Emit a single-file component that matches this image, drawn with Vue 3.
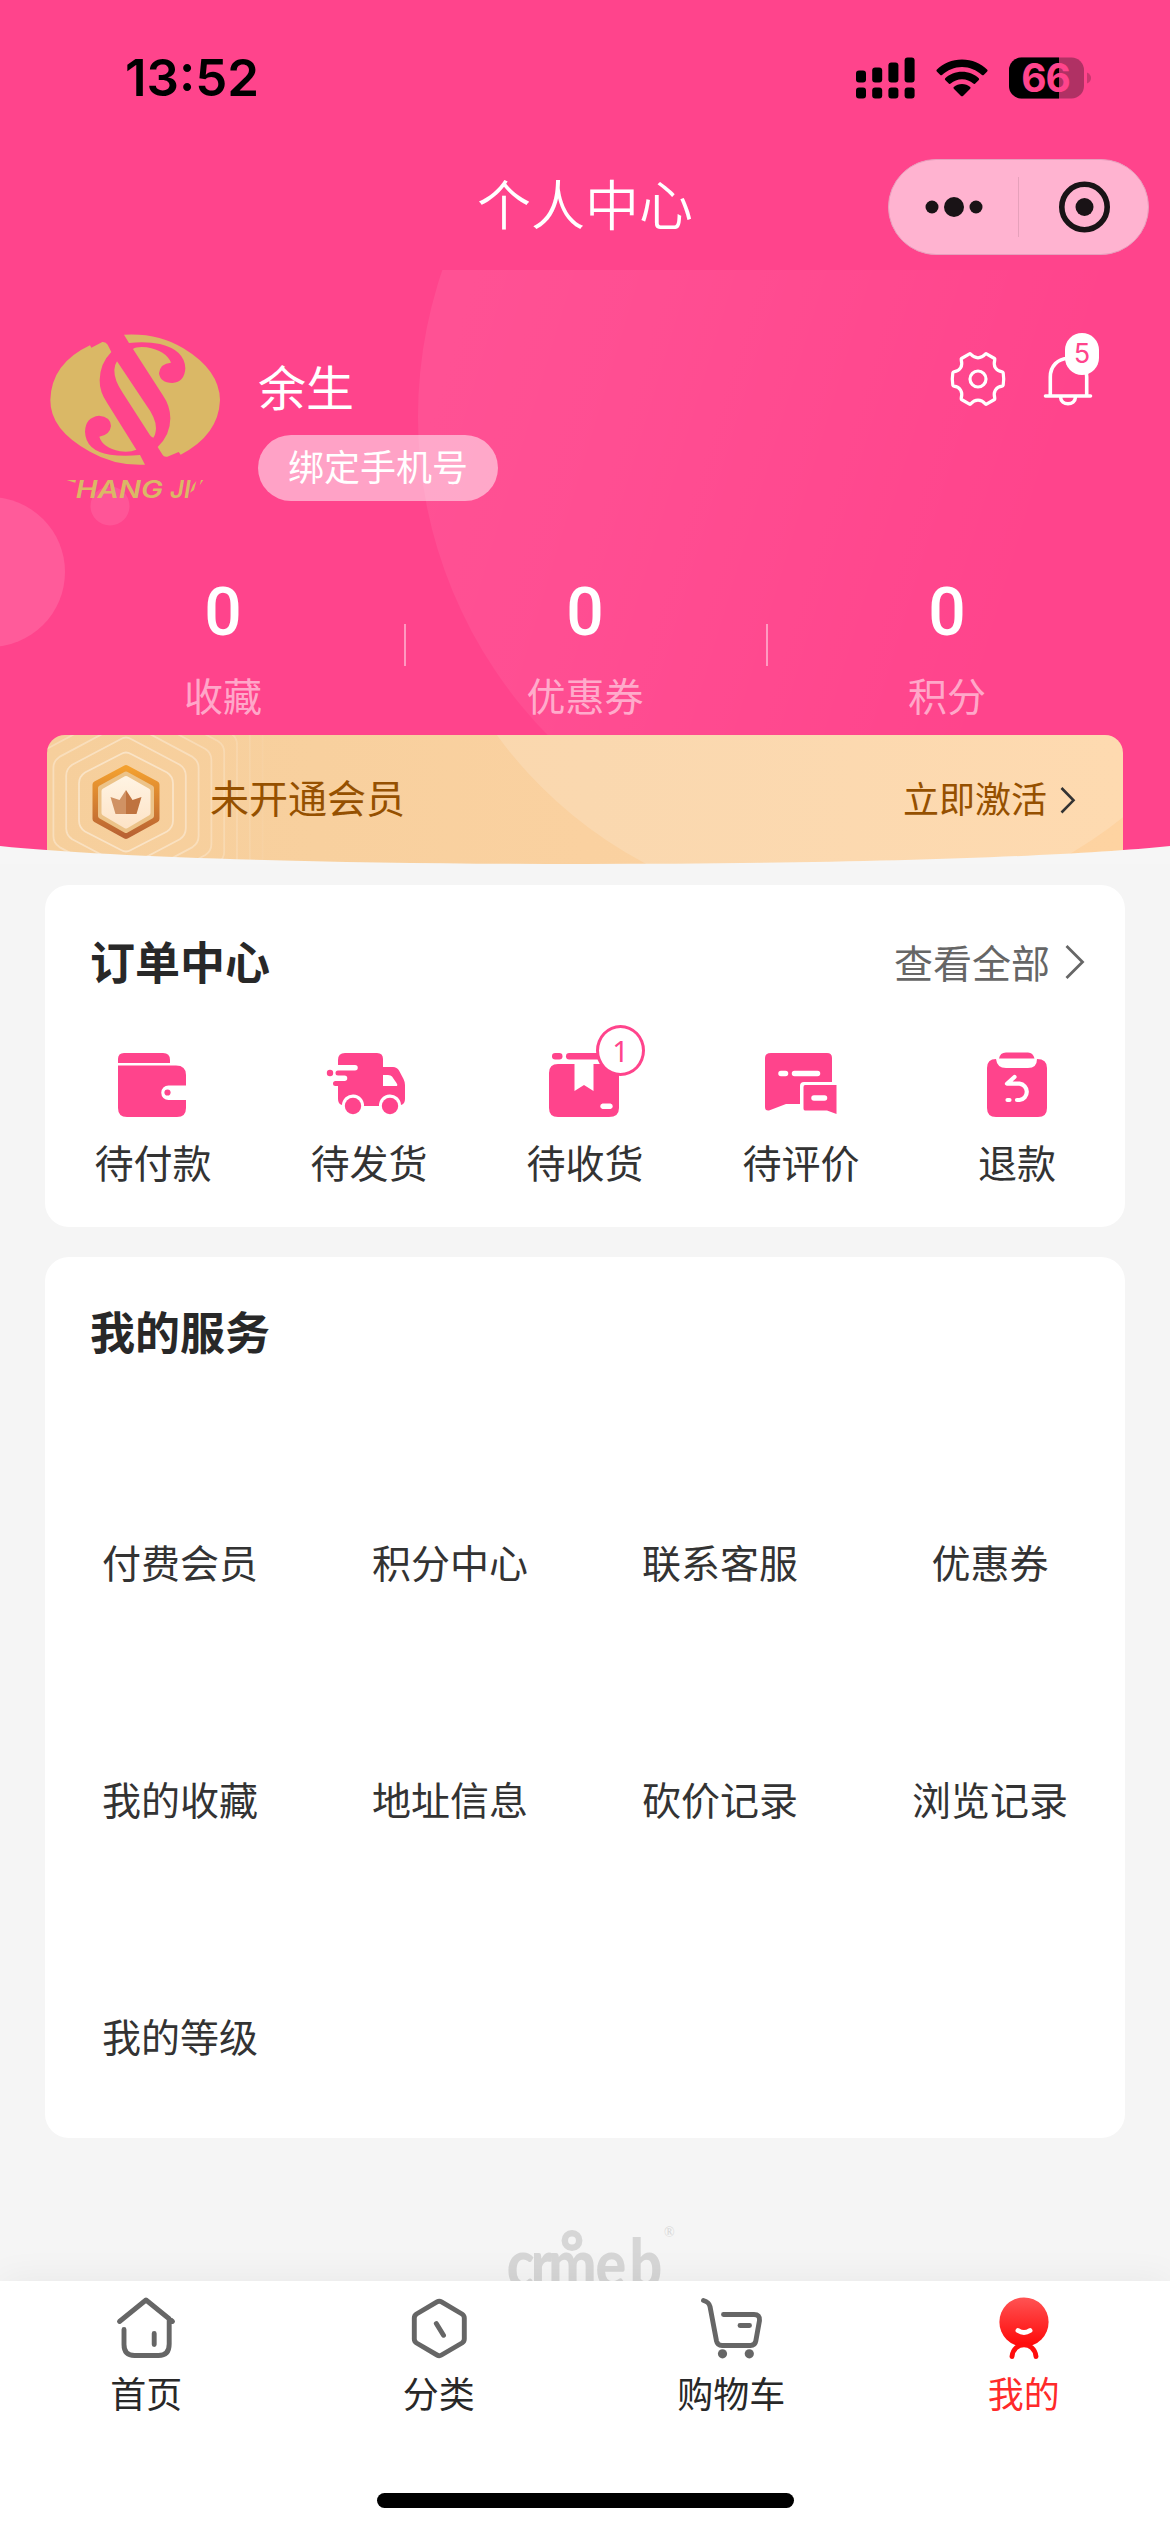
<script setup>
const stats = [
  { value: 0, label: '收藏' },
  { value: 0, label: '优惠券' },
  { value: 0, label: '积分' },
]
const orders = [
  { icon: 'wallet', label: '待付款' },
  { icon: 'truck', label: '待发货' },
  { icon: 'box', label: '待收货', badge: 1 },
  { icon: 'comment', label: '待评价' },
  { icon: 'refund', label: '退款' },
]
const services = [
  '付费会员', '积分中心', '联系客服', '优惠券',
  '我的收藏', '地址信息', '砍价记录', '浏览记录',
  '我的等级',
]
const tabs = [
  { icon: 'home', label: '首页' },
  { icon: 'category', label: '分类' },
  { icon: 'cart', label: '购物车' },
  { icon: 'me', label: '我的', active: true },
]
// Concentric hexagons that fade out around the member badge
const rings = [0, 1, 2, 3, 4, 5, 6, 7].map((i) => {
  const w = 47 + i * 12.8
  const h = 51 + i * 15
  const s = h * 0.52
  return {
    d: `M${79 - 5} ${67 - h + 3} Q79 ${67 - h} 84 ${67 - h + 3} L${79 + w - 6} ${67 - s - 3} Q${79 + w} ${67 - s + 1} ${79 + w} ${67 - s + 8} V${67 + s - 8} Q${79 + w} ${67 + s - 1} ${79 + w - 6} ${67 + s + 3} L84 ${67 + h - 3} Q79 ${67 + h} 74 ${67 + h - 3} L${79 - w + 6} ${67 + s + 3} Q${79 - w} ${67 + s - 1} ${79 - w} ${67 + s - 8} V${67 - s + 8} Q${79 - w} ${67 - s + 1} ${79 - w + 6} ${67 - s - 3} Z`,
    o: 0.42 - i * 0.052,
  }
})
</script>

<template>
  <div class="page">
    <header class="header">
      <svg class="header-bg" viewBox="0 0 1170 864">
        <defs>
          <linearGradient id="orb" x1="0" y1="0.3" x2="1" y2="0.6">
            <stop offset="0" stop-color="#fff" stop-opacity="0.075" />
            <stop offset="0.25" stop-color="#fff" stop-opacity="0.055" />
            <stop offset="0.72" stop-color="#fff" stop-opacity="0" />
          </linearGradient>
          <clipPath id="below"><rect x="0" y="270" width="1170" height="594" /></clipPath>
        </defs>
        <circle cx="873" cy="417" r="455" fill="url(#orb)" clip-path="url(#below)" />
        <circle cx="-10" cy="572" r="75" fill="#ff5b9a" />
        <circle cx="110" cy="506" r="19.5" fill="#ff5597" />
      </svg>

      <div class="status">
        <span class="time">13:52</span>
        <div class="status-icons">
          <svg width="59" height="42" viewBox="0 0 59 42">
            <rect x="0" y="13.500" width="10" height="12" rx="3" />
            <rect x="16.200" y="10.500" width="10" height="15" rx="3" />
            <rect x="32.400" y="5.500" width="10" height="20" rx="3" />
            <rect x="48.600" y="0.500" width="10" height="25" rx="3" />
            <rect x="0" y="30.500" width="10" height="11" rx="3" />
            <rect x="16.200" y="30.500" width="10" height="11" rx="3" />
            <rect x="32.400" y="30.500" width="10" height="11" rx="3" />
            <rect x="48.600" y="30.500" width="10" height="11" rx="3" />
          </svg>
          <svg class="wifi" width="52" height="38" viewBox="0 0 52 38">
            <path d="M26 0.500C36 0.500 45 4.500 51.300 10.800Q52 11.600 51.200 12.500L47.700 16Q46.900 16.700 46 16C40.500 11 33.500 8 26 8S11.500 11 6 16Q5.100 16.700 4.300 16L0.800 12.500Q0 11.600 0.700 10.800C7 4.500 16 0.500 26 0.500Z" />
            <path d="M26 12.800C32.600 12.800 38.500 15.300 42.800 19.300Q43.500 20.200 42.800 21L39 24.700Q38.200 25.400 37.300 24.600C34.200 21.900 30.300 20.300 26 20.300S17.800 21.900 14.700 24.600Q13.800 25.400 13 24.700L9.200 21Q8.500 20.200 9.200 19.300C13.500 15.300 19.400 12.800 26 12.800Z" />
            <path d="M26 25C29 25 32 26.200 34.200 28Q35 28.900 34.200 29.700L27 36.900Q26 37.700 25 36.900L17.800 29.700Q17 28.900 17.800 28C20 26.200 23 25 26 25Z" />
          </svg>
          <svg width="82" height="42" viewBox="0 0 82 42">
            <clipPath id="cell"><rect x="0" y="0.500" width="75" height="41" rx="12.500" /></clipPath>
            <g clip-path="url(#cell)">
              <rect width="75" height="42" fill="#b03164" />
              <rect width="50" height="42" />
            </g>
            <path d="M78 15.500Q82 17.500 82 21T78 26.500Z" fill="#c9376f" />
            <text x="36.500" y="35" class="cell-text" text-anchor="middle">66</text>
          </svg>
        </div>
      </div>

      <div class="nav">
        <h1 class="nav-title">个人中心</h1>
        <div class="capsule">
          <svg width="129" height="94" viewBox="0 0 129 94">
            <circle cx="43" cy="47" r="6.500" /><circle cx="65" cy="47" r="10" /><circle cx="87" cy="47" r="6.500" />
          </svg>
          <i class="capsule-line"></i>
          <svg width="129" height="94" viewBox="0 0 129 94">
            <circle cx="65.500" cy="47" r="22.700" fill="none" stroke="#191316" stroke-width="5.600" />
            <circle cx="65.500" cy="47" r="9" />
          </svg>
        </div>
      </div>

      <div class="user">
        <svg class="avatar" width="180" height="180" viewBox="54 30 540 540">
          <g fill="#dab866">
            <path d="M180 76L184 83L217 66Q228 65 233 74L244 96Q210 130 209 180Q208 215 232 250L319 389Q300 398 270 394Q217 382 208 350Q240 345 243 318Q242 290 207 287Q166 292 165 335Q167 392 240 404Q280 410 330 405L345 434Q255 438 180 395Q60 330 61 240Q64 130 180 76Z" />
            <path d="M282 44Q385 38 460 85Q568 150 570 240Q566 345 452 404L446 396L412 410Q402 412 398 405L383 381Q421 345 421 295Q421 258 398 225L309 87Q320 79 350 82Q408 92 423 128Q390 130 387 160Q390 188 427 189Q464 186 466 145Q464 90 390 72Q350 64 297 69Z" />
            <path d="M261 124L345 250Q379 296 378 325Q377 345 370 353Q364 352 360 346L278 218Q252 180 253 150Q254 134 261 124Z" />
            <path d="M110 480H138L136 488L128 486ZM513 480H520L509 496ZM489 495L499 483L492 510L480 518Z" />
          </g>
          <text x="137" y="533" textLength="262" lengthAdjust="spacingAndGlyphs" class="avatar-text">HANG</text>
          <text x="420" y="533" textLength="62" lengthAdjust="spacingAndGlyphs" class="avatar-text">JI</text>
        </svg>
        <div class="user-info">
          <div class="user-name">余生</div>
          <div class="bind">绑定手机号</div>
        </div>
        <div class="user-tools">
          <svg width="56" height="56" viewBox="0 0 56 56" fill="none" stroke="#fff" stroke-width="3.200" stroke-linejoin="round">
            <path d="M19.500 2.800Q20 2.500 20.600 3Q24 6.800 28 6.800T35.400 3Q36 2.500 36.500 2.800L44.500 7.500Q45 8 44.800 8.700C43 15 45.500 20 52.200 20.900Q53 21 53.200 21.800Q54.200 28 53.200 34.200Q53 35 52.200 35.100C45.500 36 43 41 44.800 47.300Q45 48 44.500 48.500L36.500 53.200Q36 53.500 35.400 53Q32 49.200 28 49.200T20.600 53Q20 53.500 19.500 53.200L11.500 48.500Q11 48 11.200 47.300C13 41 10.500 36 3.800 35.100Q3 35 2.800 34.200Q1.800 28 2.800 21.800Q3 21 3.800 20.900C10.500 20 13 15 11.200 8.700Q11 8 11.500 7.500Z" />
            <circle cx="28" cy="28" r="8" />
          </svg>
          <div class="bell">
            <svg width="52" height="56" viewBox="0 0 52 56" fill="none" stroke="#fff" stroke-width="3.600" stroke-linecap="round">
              <path d="M8.300 44V26C8.300 15 16 7.500 26 7.500S44.700 15 44.700 26V44M3.500 45H48.500M18.500 46C19 55 33 55 33.500 46" />
            </svg>
            <span class="bell-count">5</span>
          </div>
        </div>
      </div>

      <div class="stats">
        <div v-for="s in stats" :key="s.label" class="stat">
          <div class="stat-value">{{ s.value }}</div>
          <div class="stat-label">{{ s.label }}</div>
        </div>
      </div>

      <div class="member">
        <svg class="member-bg" viewBox="0 0 1076 129">
          <circle cx="802" cy="-257" r="436" fill="#fff" fill-opacity="0.16" />
          <path v-for="(r, i) in rings" :key="i" :d="r.d" fill="none" stroke="#fff" stroke-width="1.800" :stroke-opacity="r.o" />
        </svg>
        <svg class="member-badge" width="70" height="76" viewBox="0 0 70 76">
          <defs>
            <linearGradient id="rim" x1="0" y1="0" x2="0" y2="1"><stop offset="0" stop-color="#f3a02f" /><stop offset="1" stop-color="#b96333" /></linearGradient>
            <linearGradient id="inner" x1="0" y1="0" x2="0" y2="1"><stop offset="0" stop-color="#fff3e2" /><stop offset="1" stop-color="#fde4c8" /></linearGradient>
          </defs>
          <path d="M35 4.500L65 20.500V55L35 71.500L5 55V20.500Z" fill="url(#rim)" stroke="url(#rim)" stroke-width="7" stroke-linejoin="round" />
          <path d="M35 10L60.500 24V52L35 66.500L9.500 52V24Z" fill="#ecc389" stroke="#ecc389" stroke-width="5" stroke-linejoin="round" />
          <path d="M35 14.500L57 27V49L35 62L13 49V27Z" fill="url(#inner)" stroke="url(#inner)" stroke-width="5" stroke-linejoin="round" />
          <path d="M19.500 33L28.500 36L35 26V50H24.500Z" fill="#d09264" /><path d="M50.500 33L41.500 36L35 26V50H45.500Z" fill="#bf733f" />
        </svg>
        <span class="member-title">未开通会员</span>
        <span class="member-action">立即激活</span>
        <svg class="member-arrow" width="16" height="28" viewBox="0 0 16 28" fill="none" stroke="#333" stroke-width="2.600"><path d="M1.500 2L13.500 14.300L1.500 26.500" /></svg>
      </div>

      <svg class="curve" viewBox="0 0 1170 20"><path d="M0 2C230 26 940 26 1170 2V20H0Z" fill="#f6f6f6" /></svg>
    </header>

    <section class="card orders">
      <div class="card-head">
        <h2 class="card-title">订单中心</h2>
        <div class="more">
          <span>查看全部</span>
          <svg width="20" height="36" viewBox="0 0 20 36" fill="none" stroke="#666" stroke-width="2.800"><path d="M1.500 2L17.500 18L1.500 34" /></svg>
        </div>
      </div>
      <div class="order-row">
        <div v-for="o in orders" :key="o.icon" class="order">
          <div class="order-icon">
            <svg width="76" height="68" viewBox="0 0 76 68" fill="#ff448c">
              <template v-if="o.icon === 'wallet'">
                <path d="M3 12V8Q3 2 9 2H48Q55 2 55 9V12Z" />
                <path d="M3 14.500H61Q71 14.500 71 24V34.500H53.500A7 7 0 0 0 53.500 49H71V57Q71 66 62 66H12Q3 66 3 57Z" />
                <circle cx="52.500" cy="41.500" r="3.100" />
              </template>
              <template v-else-if="o.icon === 'truck'">
                <path d="M7 14V9Q7 2 14 2H46Q52 2 52 8V16H62Q66 16 68 19.500L72.500 28Q74 31 74 34V48Q74 53 70 54A11 11 0 0 0 48 55H33A11 11 0 0 0 11 54Q7 53 7 48V35H4.500A2.500 2.500 0 0 1 4.500 30H13.500A2.600 2.600 0 0 0 13.500 24.500H7A2.500 2.500 0 0 1 7 19.500H24A2.700 2.700 0 0 0 24 14ZM52 24V35H66Q67 34 65.500 32L61 25.500Q60 24 57 24Z" />
                <circle cx="-1" cy="22" r="3.200" /><circle cx="22" cy="55" r="8.200" /><circle cx="59" cy="55" r="8.200" />
              </template>
              <template v-else-if="o.icon === 'box'">
                <rect x="5" y="2" width="10.500" height="6.500" rx="3.200" /><rect x="19" y="2" width="48" height="6.500" rx="3.200" />
                <path d="M11 13H27.500V40L37 34L46.500 40V13H62Q72 13 72 22V57Q72 66 62 66H11Q2 66 2 57V22Q2 13 11 13ZM55.500 52.500A2.800 2.800 0 0 0 55.500 58H63.500A2.800 2.800 0 0 0 63.500 52.500Z" />
              </template>
              <template v-else-if="o.icon === 'comment'">
                <path d="M8 2H64Q69 2 69 7V31H41Q37 31 37 35V53H23L6 59.500Q2 60 2 56V7Q2 2 8 2Z" />
                <path d="M42 34H73.500V63L64 59.500H42Q40.500 59.500 40.500 57.500V36Q40.500 34 42 34Z" />
                <path d="M18 22.500H22.500M31.500 22.500H54.500M51 47H61.500" fill="none" stroke="#fff" stroke-width="5.500" stroke-linecap="round" />
              </template>
              <template v-else>
                <path d="M20 7.500Q21 1.500 27 1.500H49Q54 1.500 55.500 7.500Z" />
                <path d="M17 8Q18 17 27 17H49Q58 17 58 8Q68 8 68 17V57Q68 66 59 66H17Q8 66 8 57V17Q8 8 17 8Z" />
                <path d="M35.500 26L28 32.700H40.500A8.200 8.200 0 0 1 40.500 49H38M28.500 49H30.500" fill="none" stroke="#fff" stroke-width="4.200" stroke-linecap="round" stroke-linejoin="round" />
              </template>
            </svg>
            <span v-if="o.badge" class="order-badge">{{ o.badge }}</span>
          </div>
          <div class="order-label">{{ o.label }}</div>
        </div>
      </div>
    </section>

    <section class="card services">
      <h2 class="card-title services-title">我的服务</h2>
      <div class="service-grid">
        <div v-for="s in services" :key="s" class="service">{{ s }}</div>
      </div>
    </section>

    <div class="brand">
      <svg width="166" height="60" viewBox="0 0 166 60" fill="#d6d6d6">
        <text transform="scale(0.83 1)" x="2 31 52 109 150" y="58" class="brand-text">crmeb</text>
        <circle cx="67" cy="10.500" r="7.200" fill="none" stroke="#d6d6d6" stroke-width="6.500" />
        <text x="159" y="7" class="brand-mark">®</text>
      </svg>
    </div>

    <nav class="tabbar">
      <div class="tabs">
        <div v-for="t in tabs" :key="t.icon" class="tab" :class="{ active: t.active }">
          <svg width="66" height="66" viewBox="0 0 66 66" fill="none" stroke="#666" stroke-width="4.900" stroke-linecap="round" stroke-linejoin="round">
            <path v-if="t.icon === 'home'" d="M6.500 26.500L33 5L59.500 26.500M56.200 24V49Q56.200 60.500 45.500 60.500H21.500Q11 60.500 11 49.500V34.500M41.200 38.500V49.500" />
            <path v-else-if="t.icon === 'category'" d="M31 6.800Q33.300 5.500 35.500 6.800L56 19Q58.300 20.500 58.300 23V44Q58.300 46.500 56 48L35.500 60Q33.300 61.300 31 60L10.500 48Q8.300 46.500 8.300 44V23Q8.300 20.500 10.500 19ZM30.300 28.500L37.500 40.300" />
            <template v-else-if="t.icon === 'cart'">
              <path d="M5.500 5.500Q11 7 12 11.500L18.500 46Q19.500 50.500 24 50.500H52.500Q57 50.500 57.800 46L61.500 25.500Q62 19.500 56 19.500H25.500M42 30.500H51.500" />
              <g fill="#666" stroke="none"><circle cx="24.500" cy="58.800" r="4.600" /><circle cx="51.300" cy="58.800" r="4.600" /></g>
            </template>
            <template v-else>
              <defs><linearGradient id="face" x1="0" y1="0" x2="0" y2="1"><stop offset="0" stop-color="#ff5353" /><stop offset="1" stop-color="#ff0808" /></linearGradient></defs>
              <circle cx="33" cy="27" r="24.600" fill="url(#face)" stroke="none" />
              <path d="M21 61.500C22.500 46 43.500 46 45 61.500" stroke="#ff0d0d" />
              <path d="M27 35.500Q33 39.500 39 35.500" stroke="#fff" />
            </template>
          </svg>
          <span>{{ t.label }}</span>
        </div>
      </div>
      <i class="indicator"></i>
    </nav>
  </div>
</template>

<style>
body { margin: 0; background: #f5f5f5; }
</style>

<style scoped>
.page {
  width: 1170px;
  height: 2532px;
  display: flex;
  flex-direction: column;
  overflow: hidden;
  background: #f5f5f5;
  color: #333;
  font-family: "Noto Sans CJK SC", sans-serif;
  font-size: 39px;
}
svg { display: block; flex: none; overflow: visible; }
h1, h2 { margin: 0; }
.header {
  position: relative;
  height: 864px;
  flex: none;
  display: flex;
  flex-direction: column;
  background: #ff448c;
  color: #fff;
}
.header-bg { position: absolute; left: 0; top: 0; width: 1170px; height: 864px; overflow: hidden; }
.status, .nav, .user, .stats, .member { position: relative; }
.status { height: 141px; display: flex; align-items: flex-start; justify-content: space-between; padding: 0 79px 0 125px; color: #000; }
.time { margin-top: 48px; line-height: 60px; font-family: Inter, sans-serif; font-weight: 600; font-size: 51px; }
.status-icons { display: flex; margin-top: 56.500px; }
.wifi { margin: 2px 21px; }
.cell-text { font: 700 39px Inter, sans-serif; fill: #ff448c; letter-spacing: -1px; }
.nav { height: 129px; display: flex; align-items: center; justify-content: center; }
.nav-title { font-size: 54px; font-weight: 350; line-height: 80px; margin-top: -6px; }
.capsule {
  position: absolute; right: 21px; top: 18px;
  box-sizing: border-box; width: 261px; height: 96px;
  display: flex; align-items: center;
  border: 1px solid #e79fbd; border-radius: 48px; background: #ffb3d0;
  fill: #191316;
}
.capsule-line { width: 1.500px; height: 60px; background: #e6a1bb; }
.user { display: flex; height: 180px; margin-top: 60px; padding-left: 48px; align-items: flex-start; }
.avatar-text { font: italic 600 72px Inter, sans-serif; fill: #dab866; }
.user-info { margin-left: 30px; padding-top: 25px; }
.user-name { font-size: 48px; line-height: 60px; }
.bind { margin-top: 20px; height: 66px; line-height: 61px; padding: 0 30px; border-radius: 33px; background: rgba(255, 255, 255, 0.5); font-size: 36px; }
.user-tools { margin-left: auto; display: flex; padding: 21px 76px 0 0; gap: 36px; }
.bell { position: relative; }
.bell-count {
  position: absolute; left: 23px; top: -18px; width: 34px; height: 42px; border-radius: 17px;
  background: #fff; color: #ff448c; text-align: center;
  font: 400 27px/42px Inter, sans-serif;
}
.stats { display: flex; justify-content: center; height: 225px; }
.stat { position: relative; width: 362px; display: flex; flex-direction: column; align-items: center; }
.stat + .stat::before { content: ""; position: absolute; left: 0; top: 114px; width: 2px; height: 42px; background: rgba(255, 255, 255, 0.45); }
.stat-value { margin-top: 63px; font: 500 66px/80px Roboto, sans-serif; }
.stat-label { margin-top: 16px; font-size: 39px; line-height: 50px; color: rgba(255, 255, 255, 0.55); font-weight: 400; }
.member {
  height: 129px; margin: 0 47px; display: flex; align-items: flex-start; overflow: hidden;
  border-radius: 18px 18px 0 0; color: #955000;
  background: linear-gradient(90deg, #f6cf9c, #fad1a0 50%, #fed3a1);
}
.member-bg { position: absolute; left: 0; top: 0; width: 1076px; height: 129px; }
.member-badge, .member-title, .member-action, .member-arrow { position: relative; }
.member-badge { margin: 29px 0 0 44px; }
.member-title { margin-left: 49px; margin-top: 36px; font-size: 39px; line-height: 50px; }
.member-action { margin-left: auto; margin-top: 37px; font-size: 36px; line-height: 50px; }
.member-arrow { margin: 51px 47px 0 13px; }
.curve { position: absolute; left: 0; bottom: 0; width: 1170px; height: 20px; overflow: hidden; }
.card { flex: none; margin: 0 45px; border-radius: 24px; background: #fff; }
.orders { margin-top: 21px; height: 342px; }
.card-head { display: flex; align-items: center; justify-content: space-between; padding: 45px 40px 0 45px; height: 64px; }
.card-title { font-size: 45px; line-height: 64px; font-weight: 700; color: #282828; }
.card-head .card-title { margin-top: -3px; }
.more { display: flex; align-items: center; gap: 15px; color: #666; line-height: 60px; }
.more span { margin-top: -3px; }
.order-row { display: flex; padding-top: 57px; }
.order { width: 216px; display: flex; flex-direction: column; align-items: center; }
.order-icon { position: relative; }
.order-badge {
  position: absolute; left: 49px; top: -26px; box-sizing: border-box; width: 49px; height: 51px;
  border: 3px solid #ff448c; border-radius: 50%; background: #fff; color: #ff448c;
  text-align: center; font: 400 29px/46px "Noto Sans", sans-serif;
}
.order-label { margin-top: 17px; line-height: 50px; }
.services { margin-top: 30px; height: 881px; }
.services-title { padding: 42px 45px 0; }
.service-grid { display: flex; flex-wrap: wrap; padding-top: 56px; }
.service { width: 270px; height: 237px; box-sizing: border-box; padding-top: 117px; text-align: center; line-height: 50px; }
.brand { display: flex; justify-content: center; padding: 92px 0 0 5px; height: 51px; flex: none; }
.brand-text { font: 900 69px Lato, sans-serif; }
.brand-mark { font: 14px "Liberation Serif", serif; }
.tabbar {
  position: relative; height: 251px; flex: none; display: flex; flex-direction: column; align-items: center;
  background: #fff; box-shadow: 0 0 36px rgba(0, 0, 0, 0.06);
}
.tabs { display: flex; width: 1170px; padding-top: 14px; }
.tab { width: 292.500px; display: flex; flex-direction: column; align-items: center; font-size: 36px; line-height: 50px; color: #282828; }
.tab span { margin-top: 6px; }
.tab.active { color: #ff2a2a; }
.indicator { margin-top: 76px; width: 417px; height: 15px; border-radius: 8px; background: #000; }
</style>
